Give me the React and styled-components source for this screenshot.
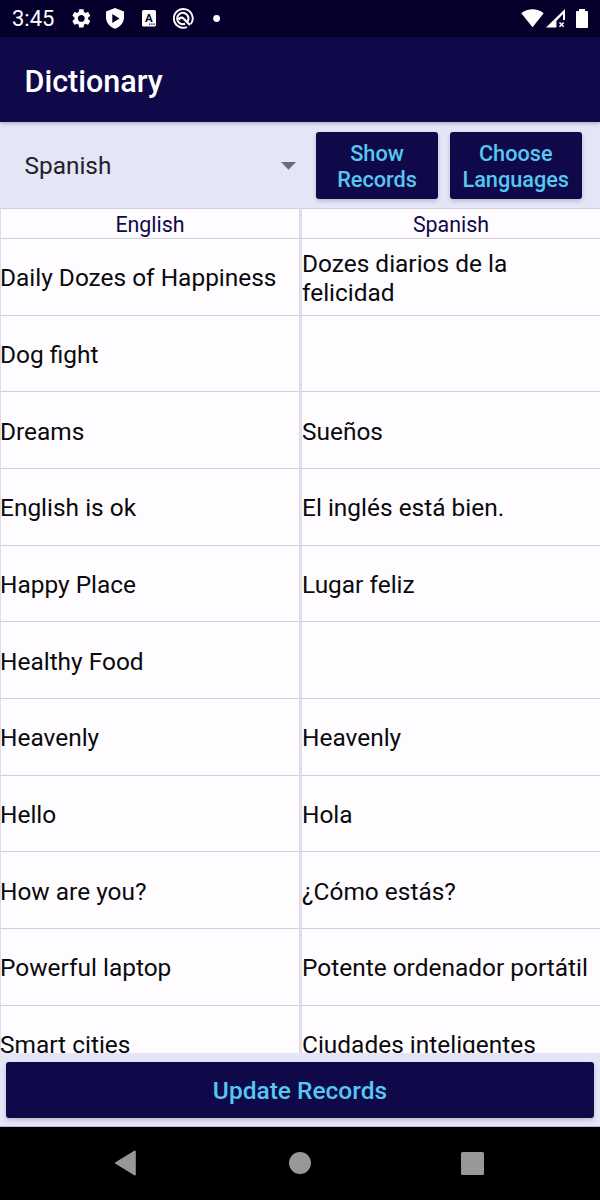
import React from 'react';
import styled, { createGlobalStyle } from 'styled-components';

const Global = createGlobalStyle`
  * { box-sizing: border-box; }
  body { margin: 0; background: #e4e5f6; font-family: Roboto, "Liberation Sans", sans-serif; }
`;

const Screen = styled.div`
  width: 600px;
  height: 1200px;
  display: flex;
  flex-direction: column;
  overflow: hidden;
  background: #e4e5f6;
`;

const StatusBar = styled.div`
  height: 37px;
  flex: none;
  display: flex;
  align-items: center;
  justify-content: space-between;
  padding: 0 11px 0 12px;
  background: #05002b;
  color: #fff;
`;

const Clock = styled.span`
  width: 59px;
  padding-top: 1px;
  font-size: 22px;
  line-height: 26px;
`;

const StatusGroup = styled.div`
  display: flex;
  align-items: center;
  height: 37px;
  svg { display: block; }
`;

const AppBar = styled.header`
  height: 85px;
  flex: none;
  display: flex;
  align-items: center;
  padding: 5px 24.5px 0;
  background: #0f0849;
  box-shadow: 0 1px 4px rgba(15, 8, 73, 0.32);
  z-index: 1;
`;

const Title = styled.h1`
  margin: 0;
  font-size: 30.5px;
  line-height: 36px;
  font-weight: 500;
  color: #fff;
`;

const Toolbar = styled.div`
  height: 86px;
  flex: none;
  display: flex;
  align-items: center;
  gap: 12px;
  padding: 0 18.5px 0 24.5px;
`;

const Spinner = styled.div`
  flex: 1;
  display: flex;
  align-items: center;
  justify-content: space-between;
  padding: 0 8px 0 0;
  font-size: 24.4px;
  line-height: 29px;
  color: #222226;
  svg { margin-top: 1px; }
`;

const Button = styled.button`
  flex: none;
  width: ${(p) => p.$width};
  height: ${(p) => p.$height}px;
  padding: ${(p) => p.$top}px 0 0;
  border: 0;
  border-radius: 3px;
  background: #0f0849;
  color: #55c8f2;
  font-family: inherit;
  font-weight: 500;
  font-size: ${(p) => p.$size}px;
  line-height: 25.5px;
  white-space: pre-line;
  box-shadow: 0 2px 4px rgba(20, 15, 60, 0.2);
`;

const Table = styled.div`
  height: 845px;
  flex: none;
  overflow: hidden;
`;

const Row = styled.div`
  display: grid;
  grid-template-columns: 300px 300px;
  gap: 1px;
  height: ${(p) => (p.$head ? 31 : 76.68)}px;
`;

const Cell = styled.div`
  display: flex;
  align-items: center;
  background: #fefcff;
  border: 1px solid #d0d0d4;
  border-top-width: ${(p) => (p.$head ? 1 : 0)}px;
  border-left-color: #dcdcea;
  border-right-color: #d6d7ea;
  font-size: 24.45px;
  line-height: 29px;
  color: #0a0a0c;
`;

const CellText = styled.span`
  margin-left: ${(p) => (p.$flush ? -1 : 0)}px;
  padding-top: 2px;
  white-space: pre-line;
`;

const HeadCell = styled(Cell)`
  justify-content: center;
  padding-top: 2px;
  font-size: 21.4px;
  line-height: 25px;
  color: #0f0849;
`;

const Footer = styled.div`
  height: 74px;
  flex: none;
  padding: 9px 6px 0;
  border-bottom: 1px solid #b9b9c6;
`;

const NavBar = styled.nav`
  height: 73px;
  flex: none;
  background: #000;
  display: grid;
  grid-template-columns: 1fr 1fr 1fr;
  align-items: center;
  justify-items: center;
  padding: 0 41px 1px 40px;
  svg { display: block; }
`;

const rows = [
  ['Daily Dozes of Happiness', 'Dozes diarios de la\nfelicidad'],
  ['Dog fight', ''],
  ['Dreams', 'Sueños'],
  ['English is ok', 'El inglés está bien.'],
  ['Happy Place', 'Lugar feliz'],
  ['Healthy Food', ''],
  ['Heavenly', 'Heavenly'],
  ['Hello', 'Hola'],
  ['How are you?', '¿Cómo estás?'],
  ['Powerful laptop', 'Potente ordenador portátil'],
  ['Smart cities', 'Ciudades inteligentes'],
];

const NotificationIcons = () => (
  <svg width="155" height="37" viewBox="71 0 155 37" fill="#fff">
    <path
      transform="translate(69.900 7) scale(.95)"
      d="M19.14 12.94c.04-.3.06-.61.06-.94 0-.32-.02-.64-.07-.94l2.03-1.58c.18-.14.23-.41.12-.61l-1.92-3.32c-.12-.22-.37-.29-.59-.22l-2.39.96c-.5-.38-1.03-.7-1.62-.94l-.36-2.54c-.04-.24-.24-.41-.48-.41h-3.84c-.24 0-.43.17-.47.41l-.36 2.54c-.59.24-1.13.57-1.62.94l-2.39-.96c-.22-.08-.47 0-.59.22L2.74 8.87c-.12.21-.08.47.12.61l2.03 1.58c-.05.3-.09.63-.09.94s.02.64.07.94l-2.03 1.58c-.18.14-.23.41-.12.61l1.92 3.32c.12.22.37.29.59.22l2.39-.96c.5.38 1.03.7 1.62.94l.36 2.54c.05.24.24.41.48.41h3.84c.24 0 .44-.17.47-.41l.36-2.54c.59-.24 1.13-.56 1.62-.94l2.39.96c.22.08.47 0 .59-.22l1.92-3.32c.12-.22.07-.47-.12-.61l-2.01-1.58zM12 15.6c-1.98 0-3.6-1.62-3.6-3.6s1.62-3.6 3.6-3.6 3.6 1.62 3.6 3.6-1.62 3.6-3.6 3.6z"
    />
    <path
      fillRule="evenodd"
      d="M115 8l9 3.400v6.200c0 5-3.700 9.500-9 11.200-5.300-1.700-9-6.200-9-11.200v-6.200zM112.300 14v9l7.200-4.500z"
    />
    <rect x="142" y="10" width="14" height="16.500" rx="1.500" />
    <text x="148.900" y="21.900" textAnchor="middle" fontSize="11.500" fontWeight="700" fontFamily="Roboto, sans-serif" fill="#05002b">A</text>
    <path d="M149 23.500h1.300v1.300H149zM151.300 23.500h1.300v1.300h-1.300zM153.600 23.500h1.300v1.300h-1.300z" fill="#05002b" />
    <g fill="none" stroke="#fff">
      <path d="M190.800 24A9.400 9.400 0 1 0 187 27" strokeWidth="1.900" />
      <path d="M187.700 21.500A5.700 5.700 0 1 0 185 23.800" strokeWidth="2.100" />
      <path d="M178.500 19.700c1.500-2.300 3.500-2.700 5.200-.9l6.300 6.200" strokeWidth="2.300" />
    </g>
    <circle cx="216.600" cy="18.500" r="3.400" />
  </svg>
);

const SystemIcons = () => (
  <svg width="68" height="37" viewBox="521 0 68 37" fill="#fff">
    <path d="M521.300 13.200c6.200-5.400 16.200-5.400 22.400 0L532.500 27.200z" />
    <path fillRule="evenodd" d="M546 27.500L565 9v11h-2v-6l-6.600 7v6.500z" />
    <path d="M559.500 22.500l4.200 4.300M563.700 22.500l-4.200 4.300" stroke="#fff" strokeWidth="1.500" />
    <path d="M579 9h6v2h2c.6 0 1 .4 1 1v15c0 .6-.4 1-1 1h-10c-.6 0-1-.4-1-1V12c0-.6.4-1 1-1h2z" />
  </svg>
);

export default function App() {
  return (
    <Screen>
      <Global />
      <StatusBar>
        <StatusGroup>
          <Clock>3:45</Clock>
          <NotificationIcons />
        </StatusGroup>
        <StatusGroup>
          <SystemIcons />
        </StatusGroup>
      </StatusBar>
      <AppBar>
        <Title>Dictionary</Title>
      </AppBar>
      <Toolbar>
        <Spinner>
          Spanish
          <svg width="15" height="8" viewBox="0 0 15 8">
            <path d="M0 0h15L7.500 7.700z" fill="#6b6c75" />
          </svg>
        </Spinner>
        <Button $width="122px" $height={67} $size={21.7} $top={3}>{'Show\nRecords'}</Button>
        <Button $width="131.500px" $height={67} $size={21.7} $top={3}>{'Choose\nLanguages'}</Button>
      </Toolbar>
      <Table>
        <Row $head>
          <HeadCell $head>English</HeadCell>
          <HeadCell $head>Spanish</HeadCell>
        </Row>
        {rows.map(([en, es]) => (
          <Row key={en}>
            <Cell><CellText $flush>{en}</CellText></Cell>
            <Cell><CellText>{es}</CellText></Cell>
          </Row>
        ))}
      </Table>
      <Footer>
        <Button $width="100%" $height={56} $size={24.5} $top={2}>Update Records</Button>
      </Footer>
      <NavBar>
        <svg width="24" height="26" viewBox="0 0 24 26">
          <path d="M19.800 1.500v23L1 13z" fill="#999799" stroke="#999799" strokeWidth="2" strokeLinejoin="round" />
        </svg>
        <svg width="22" height="22" viewBox="0 0 22 22">
          <circle cx="11" cy="11" r="11" fill="#999799" />
        </svg>
        <svg width="23" height="23" viewBox="0 0 23 23">
          <rect width="23" height="23" rx="1.500" fill="#999799" />
        </svg>
      </NavBar>
    </Screen>
  );
}
